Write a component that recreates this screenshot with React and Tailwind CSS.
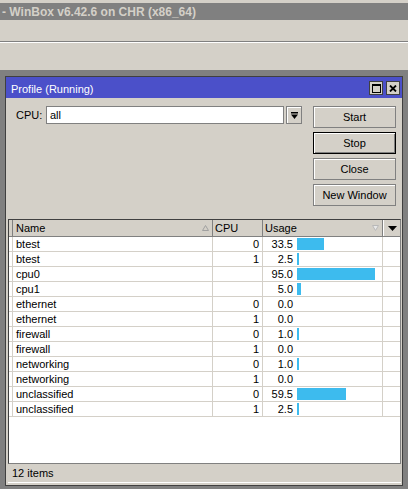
const rows = [
  ["btest", "0", 33.5],
  ["btest", "1", 2.5],
  ["cpu0", "", 95.0],
  ["cpu1", "", 5.0],
  ["ethernet", "0", 0.0],
  ["ethernet", "1", 0.0],
  ["firewall", "0", 1.0],
  ["firewall", "1", 0.0],
  ["networking", "0", 1.0],
  ["networking", "1", 0.0],
  ["unclassified", "0", 59.5],
  ["unclassified", "1", 2.5],
];

function barWidth(v) {
  if (v <= 0) return 0;
  return Math.max(2, Math.round(v * 0.82));
}

function WinButton({ children, active }) {
  return (
    <button
      type="button"
      className={`flex h-[22px] w-[83px] items-center justify-center bg-[#d4d0c8] pt-[1px] text-black ${
        active ? "border border-black shadow-[inset_1px_1px_0_#fff,inset_-1px_-1px_0_#808080]" : "border border-[#808080] shadow-[inset_1px_1px_0_#fff]"
      }`}
    >
      {children}
    </button>
  );
}

function SortUp() {
  return (
    <svg width="7" height="6" viewBox="0 0 7 6">
      <path d="M3.5 0.5 L6.5 5.5 L0.5 5.5 Z" fill="#d4d0c8" stroke="#a0a0a0" strokeWidth="1" />
    </svg>
  );
}

function SortDown() {
  return (
    <svg width="7" height="6" viewBox="0 0 7 6">
      <path d="M0.5 0.5 L6.5 0.5 L3.5 5.5 Z" fill="#e8e8e8" stroke="#b8b8b8" strokeWidth="1" />
    </svg>
  );
}

export default function App() {
  return (
    <div className="h-[489px] w-[408px] overflow-hidden bg-[#808080] font-['Liberation_Sans',Arial,sans-serif] text-[11px] text-black">
      {/* winbox top chrome */}
      <div className="h-[70px] bg-[#d4d0c8]">
        <div className="h-[3px]" />
        <div className="flex h-[17px] items-center bg-[#808080] pl-[2px] text-[12px] font-bold text-[#d4d0c8]">
          - WinBox v6.42.6 on CHR (x86_64)
        </div>
        <div className="h-[21px]" />
        <div className="h-px bg-[#808080]" />
        <div className="h-px bg-white" />
      </div>

      {/* profile window */}
      <div className="pl-[5px] pt-[6px]">
        <div className="flex h-[410px] w-[398px] flex-col border border-[#404040] bg-[#d4d0c8]">
          <div className="flex h-[21px] items-center justify-between bg-[#4b50c9] pl-[5px] pr-[2px] text-white">
            <span className="pt-[3px] text-[11px]">Profile (Running)</span>
            <div className="flex gap-[3px] pt-[1px]">
              <div className="flex h-[14px] w-[14px] items-center justify-center border border-[#404040] bg-[#d4d0c8]">
                <div className="h-[9px] w-[9px] border border-t-2 border-black" />
              </div>
              <div className="flex h-[14px] w-[14px] items-center justify-center border border-[#404040] bg-[#d4d0c8]">
                <svg width="8" height="7" viewBox="0 0 8 7">
                  <path d="M1 0.5 L7 6.5 M7 0.5 L1 6.5" stroke="#000" strokeWidth="1.8" />
                </svg>
              </div>
            </div>
          </div>

          <div className="flex pl-[10px] pt-[8px]">
            <div className="flex h-[18px] items-center">
              <span className="w-[30px]">CPU:</span>
              <div className="flex h-[18px] w-[238px] items-center border border-[#808080] bg-white pl-[3px]">all</div>
              <div className="ml-[2px] flex h-[18px] w-[16px] items-center justify-center border border-[#808080] bg-[#d4d0c8] shadow-[inset_1px_1px_0_#fff]">
                <svg width="7" height="7" viewBox="0 0 7 7">
                  <rect x="0" y="0" width="7" height="1.5" fill="#000" />
                  <path d="M0 2.5 L7 2.5 L3.5 7 Z" fill="#000" />
                </svg>
              </div>
            </div>
            <div className="ml-[11px] flex flex-col gap-[4px]">
              <WinButton>Start</WinButton>
              <WinButton active>Stop</WinButton>
              <WinButton>Close</WinButton>
              <WinButton>New Window</WinButton>
            </div>
          </div>

          {/* table */}
          <div className="ml-[2px] mt-[13px] flex h-[245px] w-[393px] flex-col border border-[#808080] border-l-[#404040] border-t-[#404040] bg-white">
            <div className="flex h-[17px] border-b border-[#808080] bg-[#d4d0c8]">
              <div className="w-[4px] border-r border-[#808080]" />
              <div className="flex w-[200px] items-center justify-between border-r border-[#808080] pl-[3px] pr-[3px]">
                <span>Name</span>
                <SortUp />
              </div>
              <div className="flex w-[50px] items-center border-r border-[#808080] pl-[2px]">CPU</div>
              <div className="flex w-[120px] items-center justify-between border-r border-[#808080] pl-[2px] pr-[3px]">
                <span>Usage</span>
                <SortDown />
              </div>
              <div className="flex flex-1 items-center justify-center border-l border-white">
                <svg width="9" height="5" viewBox="0 0 9 5">
                  <path d="M0 0 L9 0 L4.5 5 Z" fill="#000" />
                </svg>
              </div>
            </div>
            {rows.map(([name, cpu, usage], i) => (
              <div key={i} className="flex h-[15px] border-b border-[#d4d0c8]">
                <div className="w-[4px] border-r border-[#d4d0c8]" />
                <div className="flex w-[200px] items-center border-r border-[#d4d0c8] pl-[3px]">{name}</div>
                <div className="flex w-[50px] items-center justify-end border-r border-[#d4d0c8] pr-[3px]">{cpu}</div>
                <div className="flex w-[120px] items-center border-r border-[#d4d0c8]">
                  <span className="w-[30px] text-right">{usage.toFixed(1)}</span>
                  <div className="ml-[4px] h-[12px] bg-[#3dbbee]" style={{ width: barWidth(usage) }} />
                </div>
                <div className="flex-1" />
              </div>
            ))}
          </div>

          <div className="ml-[2px] flex h-[19px] w-[393px] items-center border-b border-white pl-[4px] pt-[1px]">12 items</div>
        </div>
      </div>
    </div>
  );
}
